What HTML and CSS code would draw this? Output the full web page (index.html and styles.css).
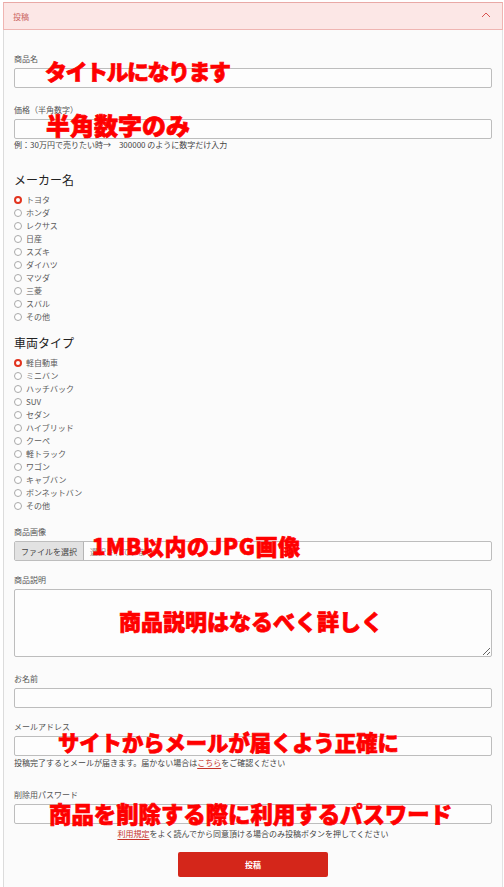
FILE: index.html
```html
<!DOCTYPE html>
<html lang="ja">
<head>
<meta charset="utf-8">
<title>投稿</title>
<link rel="stylesheet" href="styles.css">
</head>
<body>
<div class="page">
  <div class="acc-head">
    <span class="acc-title">投稿</span>
    <svg class="chev" width="10" height="6" viewBox="0 0 10 6"><polyline points="1,5 5,1 9,5" fill="none" stroke="#d9534f" stroke-width="1"/></svg>
  </div>
  <div class="acc-body">
    <div class="field f-first">
      <div class="label">商品名</div>
      <div class="wrap">
        <input class="txt" type="text">
        <span class="note n1">タイトルになります</span>
      </div>
    </div>

    <div class="field f-16">
      <div class="label">価格（半角数字）</div>
      <div class="wrap">
        <input class="txt" type="text">
        <span class="note n2">半角数字のみ</span>
      </div>
      <div class="hint">例：30万円で売りたい時→　300000 のように数字だけ入力</div>
    </div>

    <h2 class="group-title gt1">メーカー名</h2>
    <div class="radios">
      <div class="radio checked"><span class="dot"></span>トヨタ</div>
      <div class="radio"><span class="dot"></span>ホンダ</div>
      <div class="radio"><span class="dot"></span>レクサス</div>
      <div class="radio"><span class="dot"></span>日産</div>
      <div class="radio"><span class="dot"></span>スズキ</div>
      <div class="radio"><span class="dot"></span>ダイハツ</div>
      <div class="radio"><span class="dot"></span>マツダ</div>
      <div class="radio"><span class="dot"></span>三菱</div>
      <div class="radio"><span class="dot"></span>スバル</div>
      <div class="radio"><span class="dot"></span>その他</div>
    </div>

    <h2 class="group-title gt2">車両タイプ</h2>
    <div class="radios">
      <div class="radio checked"><span class="dot"></span>軽自動車</div>
      <div class="radio"><span class="dot"></span>ミニバン</div>
      <div class="radio"><span class="dot"></span>ハッチバック</div>
      <div class="radio"><span class="dot"></span>SUV</div>
      <div class="radio"><span class="dot"></span>セダン</div>
      <div class="radio"><span class="dot"></span>ハイブリッド</div>
      <div class="radio"><span class="dot"></span>クーペ</div>
      <div class="radio"><span class="dot"></span>軽トラック</div>
      <div class="radio"><span class="dot"></span>ワゴン</div>
      <div class="radio"><span class="dot"></span>キャブバン</div>
      <div class="radio"><span class="dot"></span>ボンネットバン</div>
      <div class="radio"><span class="dot"></span>その他</div>
    </div>

    <div class="field f-14">
      <div class="label">商品画像</div>
      <div class="wrap">
        <div class="file">
          <span class="file-btn">ファイルを選択</span>
          <span class="file-name">選択されていません</span>
        </div>
        <span class="note n3">1MB以内のJPG画像</span>
      </div>
    </div>

    <div class="field f-13">
      <div class="label">商品説明</div>
      <div class="wrap">
        <textarea class="area"></textarea>
        <span class="note n4">商品説明はなるべく詳しく</span>
      </div>
    </div>

    <div class="field f-16b">
      <div class="label">お名前</div>
      <div class="wrap">
        <input class="txt" type="text">
      </div>
    </div>

    <div class="field f-13">
      <div class="label">メールアドレス</div>
      <div class="wrap">
        <input class="txt" type="text">
        <span class="note n5">サイトからメールが届くよう正確に</span>
      </div>
      <div class="hint hint-mail">投稿完了するとメールが届きます。届かない場合は<a class="red-link">こちら</a>をご確認ください</div>
    </div>

    <div class="field f-20">
      <div class="label">削除用パスワード</div>
      <div class="wrap">
        <input class="txt" type="text">
        <span class="note n6">商品を削除する際に利用するパスワード</span>
      </div>
    </div>

    <p class="terms"><a class="red-link">利用規定</a>をよく読んでから同意頂ける場合のみ投稿ボタンを押してください</p>

    <div class="actions">
      <button class="submit" type="button">投稿</button>
    </div>
  </div>
</div>
</body>
</html>
```

FILE: styles.css
```css
html, body {
  margin: 0;
  padding: 0;
  background: #ffffff;
}
body {
  font-family: "Noto Sans CJK JP", "Noto Sans", sans-serif;
  color: #555;
}
.page {
  margin-left: 3px;
  width: 500px;
  padding-top: 2px;
  min-height: 885px;
  display: flex;
  flex-direction: column;
}
.acc-head {
  box-sizing: border-box;
  height: 28px;
  background: #fce7e6;
  border: 1px solid #efb5b2;
  border-top-color: #e9a9a6;
  display: flex;
  align-items: center;
  justify-content: space-between;
  padding: 0 11px 0 9px;
}
.acc-title {
  font-size: 8px;
  color: #c9625e;
}
.chev {
  display: block;
  margin-top: -2px;
}
.acc-body {
  flex: 1;
  background: #fbfbfb;
  border-left: 1px solid #dcdcdc;
  border-right: 1px solid #e2e2e2;
  padding: 23px 10px 0 10px;
}
.field {
  display: flex;
  flex-direction: column;
}
.f-16 { margin-top: 16px; }
.f-16b { margin-top: 16px; }
.f-14 { margin-top: 14px; }
.f-13 { margin-top: 13px; }
.f-20 { margin-top: 20px; }
.label {
  font-size: 8px;
  line-height: 12px;
  height: 12px;
  margin-bottom: 3px;
  color: #555;
}
.wrap {
  position: relative;
}
.txt {
  display: block;
  box-sizing: border-box;
  width: 100%;
  height: 20px;
  margin: 0;
  border: 1px solid #bdbdbd;
  border-radius: 2px;
  background: #fdfdfd;
  font-family: inherit;
  font-size: 8px;
}
.hint {
  font-size: 8px;
  line-height: 12px;
  color: #444;
}
.hint-mail {
  margin-top: 1px;
}
.red-link {
  color: #c5332a;
  text-decoration: underline;
  text-decoration-color: #c5332a;
  text-underline-offset: 2px;
}
.group-title {
  margin: 20px 0 4px 0;
  font-size: 12px;
  line-height: 18px;
  font-weight: normal;
  color: #222;
}
.gt2 {
  margin-top: 11px;
}
.radios {
  display: flex;
  flex-direction: column;
}
.radio {
  display: flex;
  align-items: center;
  height: 13px;
  font-size: 8px;
  color: #5a5a5a;
}
.dot {
  box-sizing: border-box;
  width: 8px;
  height: 8px;
  border: 1px solid #a9a9a9;
  border-radius: 50%;
  background: #fff;
  margin-right: 4px;
  flex: none;
}
.radio.checked .dot {
  border: 2px solid #e2341f;
}
.file {
  box-sizing: border-box;
  height: 20px;
  display: flex;
  align-items: stretch;
  border: 1px solid #bdbdbd;
  border-radius: 2px;
  background: #fdfdfd;
  overflow: hidden;
}
.file-btn {
  display: flex;
  align-items: center;
  padding: 0 6px;
  width: 69px;
  box-sizing: border-box;
  background: #e2e2e2;
  border-right: 1px solid #b5b5b5;
  font-size: 8px;
  color: #444;
}
.file-name {
  display: flex;
  align-items: center;
  padding-left: 6px;
  font-size: 8px;
  color: #888;
}
.area {
  display: block;
  box-sizing: border-box;
  width: 100%;
  height: 68px;
  margin: 0;
  border: 1px solid #bdbdbd;
  border-radius: 2px;
  background: #fdfdfd;
  font-family: inherit;
}
.note {
  position: absolute;
  color: #ff0000;
  font-family: "Noto Sans CJK JP", sans-serif;
  font-weight: 900;
  line-height: 0.8;
  white-space: nowrap;
  pointer-events: none;
  -webkit-text-stroke: 0.7px #ff0000;
}
.n1 { top: -6px; left: 31px; font-size: 22px; letter-spacing: -1.5px; }
.n2 { top: -4px; left: 32px; font-size: 24px; }
.n3 { top: -4px; left: 78px; font-size: 22px; letter-spacing: 0.6px; }
.n4 { top: 23px; left: 105px; font-size: 22px; }
.n5 { top: -3px; left: 44px; font-size: 21.3px; }
.n6 { top: 1px; left: 35px; font-size: 22.4px; }
.terms {
  margin: 4px 0 0 0;
  font-size: 8px;
  line-height: 12px;
  color: #444;
  text-align: center;
}
.actions {
  display: flex;
  justify-content: center;
  margin-top: 12px;
}
.submit {
  width: 150px;
  height: 25px;
  border: none;
  border-radius: 2px;
  background: #d4261a;
  color: #fff;
  font-family: inherit;
  font-size: 8px;
  font-weight: bold;
}
```
